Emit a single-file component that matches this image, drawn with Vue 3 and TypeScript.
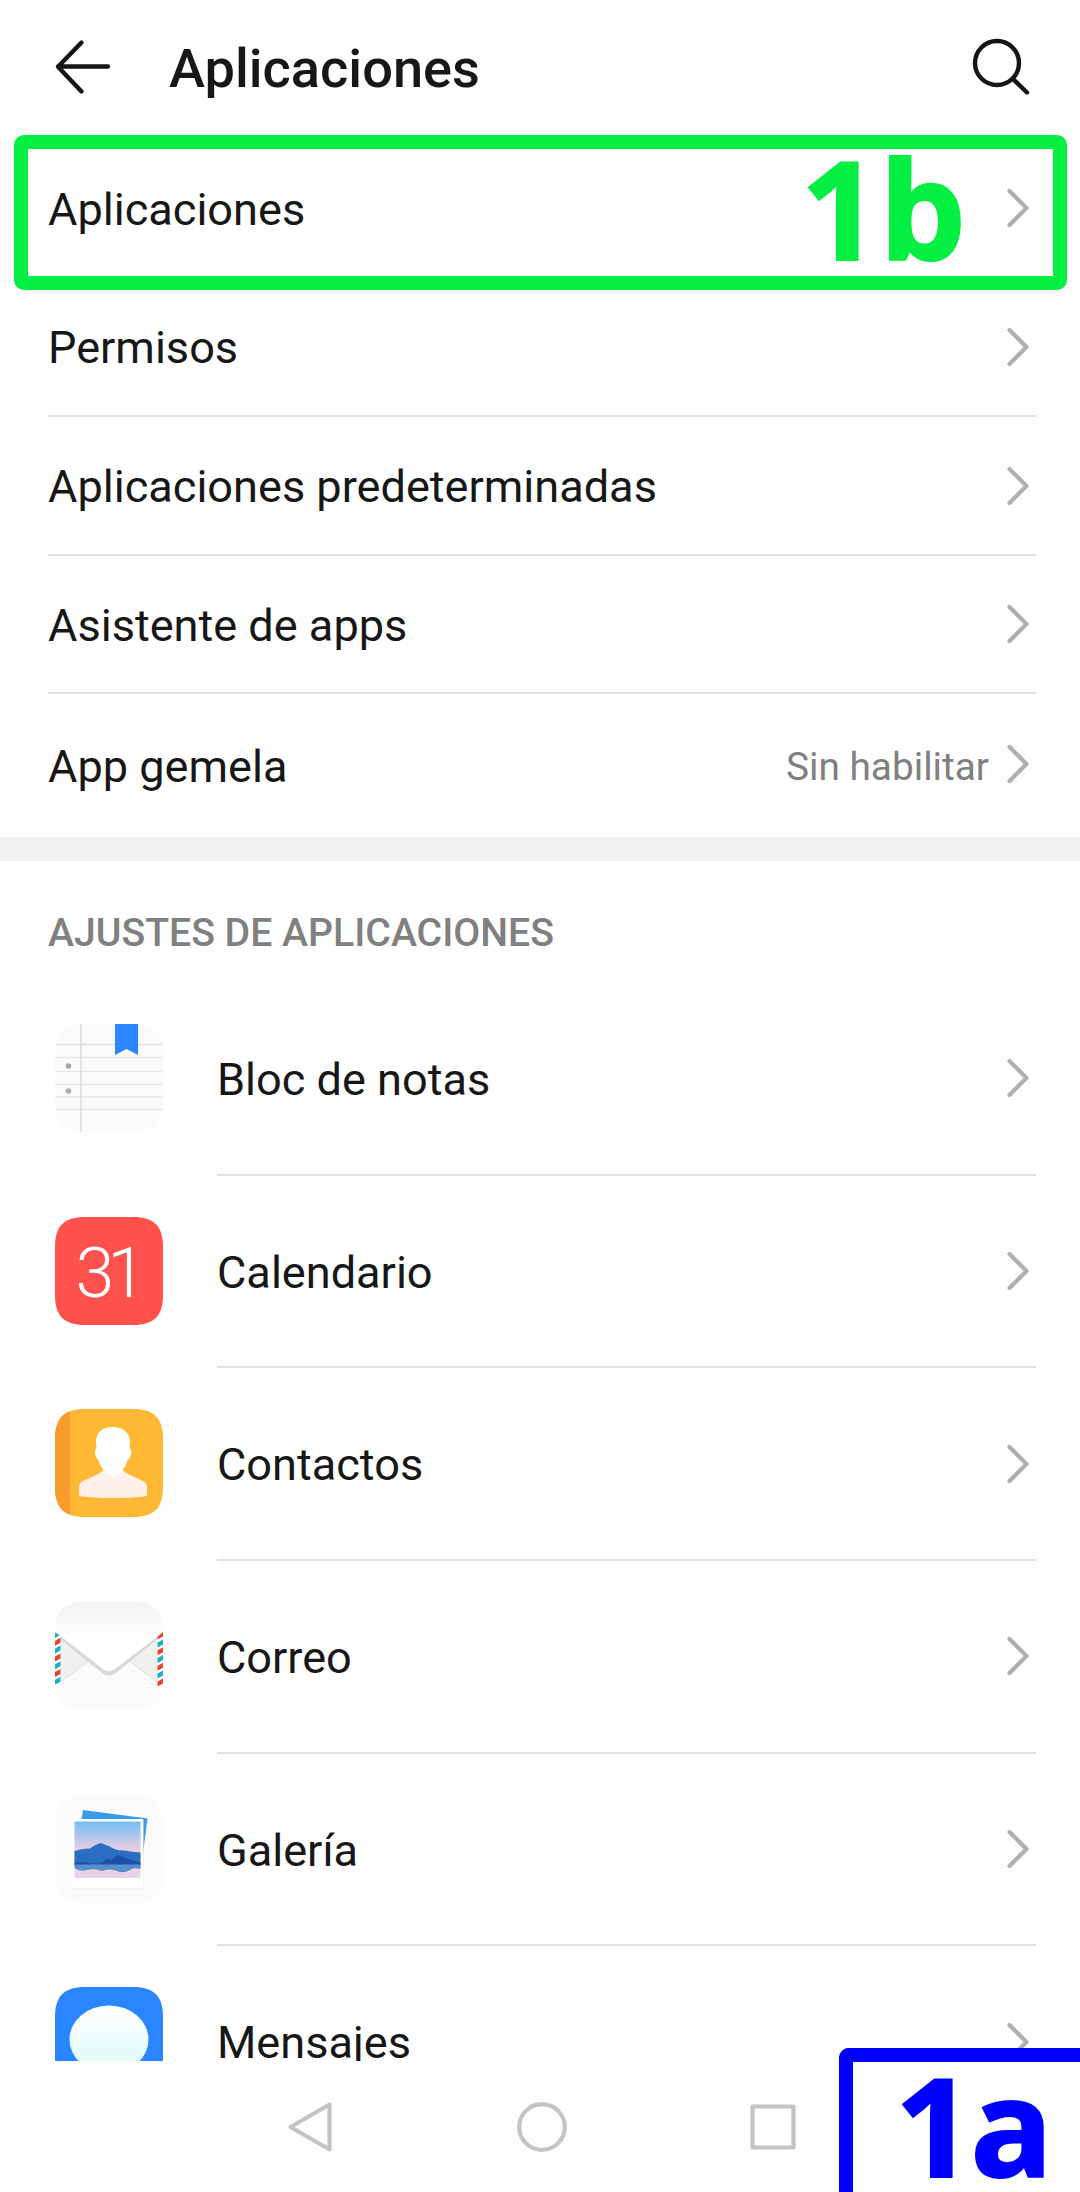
<script setup lang="ts">
interface Setting {
  label: string
  value?: string
  height: number
}

interface AppEntry {
  label: string
  icon: 'notes' | 'calendar' | 'contacts' | 'mail' | 'gallery' | 'messages'
}

const settings: Setting[] = [
  { label: 'Aplicaciones', height: 139 },
  { label: 'Permisos', height: 139 },
  { label: 'Aplicaciones predeterminadas', height: 139 },
  { label: 'Asistente de apps', height: 138 },
  { label: 'App gemela', value: 'Sin habilitar', height: 143 },
]

const apps: AppEntry[] = [
  { label: 'Bloc de notas', icon: 'notes' },
  { label: 'Calendario', icon: 'calendar' },
  { label: 'Contactos', icon: 'contacts' },
  { label: 'Correo', icon: 'mail' },
  { label: 'Galería', icon: 'gallery' },
  { label: 'Mensajes', icon: 'messages' },
]

// Rounded app tile shared by every icon
const tile = 'M30 0H78C99 0 108 9 108 30V78C108 99 99 108 78 108H30C9 108 0 99 0 78V30C0 9 9 0 30 0Z'

// Slanted airmail stripes along one edge of the envelope
const stripe = (x: number, y: number) =>
  `M${x} ${y - 1}L${x + 5.5} ${y - 4}V${y + 1}L${x} ${y + 4}Z`
const stripes = [0, 1, 2, 3, 4, 5, 6].map((i) => ({
  left: stripe(0, 32 + i * 7.8),
  right: stripe(102.5, 33.6 + i * 7.8),
  even: i % 2 === 0,
}))
</script>

<template>
  <div class="screen">
    <header class="bar">
      <svg class="back" width="60" height="60" viewBox="0 0 60 60">
        <path d="M28.500 5.500L5 29.700L28.500 54.500M5 29.500H55" />
      </svg>
      <h1>Aplicaciones</h1>
      <svg class="search" width="60" height="60" viewBox="0 0 60 60">
        <circle cx="26" cy="26" r="22" />
        <path d="M42.500 42.500L56 55.500" />
      </svg>
    </header>

    <main class="content">
      <section class="settings">
        <div v-for="s in settings" :key="s.label" class="row" :style="{ height: s.height + 'px' }">
          <span class="label">{{ s.label }}</span>
          <span v-if="s.value" class="value">{{ s.value }}</span>
          <svg class="chevron" width="24" height="40" viewBox="0 0 24 40">
            <path d="M3.500 3L20.500 20L3.500 37" />
          </svg>
        </div>
      </section>

      <div class="gap"></div>
      <h2>AJUSTES DE APLICACIONES</h2>

      <section>
        <div v-for="a in apps" :key="a.label" class="app">
          <svg class="icon" width="108" height="108" viewBox="0 0 108 108">
            <defs>
              <clipPath :id="'tile-' + a.icon"><path :d="tile" /></clipPath>
            </defs>
            <g :clip-path="`url(#tile-${a.icon})`">
              <template v-if="a.icon === 'notes'">
                <rect width="108" height="108" fill="#fbfbfb" />
                <path d="M0 20.500H108" stroke="#dedede" stroke-width="1.600" />
                <path d="M0 33.500H108M0 47.500H108M0 60.500H108M0 73H108M0 85.500H108" stroke="#e8e8e8" stroke-width="1.500" />
                <path d="M26 0V108" stroke="#dcdcdc" stroke-width="1.600" />
                <circle cx="13.500" cy="42" r="2.800" fill="#a9a9ad" />
                <circle cx="13.500" cy="67" r="2.800" fill="#a9a9ad" />
                <path d="M60 0H83V31L71.500 25L60 31Z" fill="#2b87ff" />
              </template>

              <template v-else-if="a.icon === 'calendar'">
                <rect width="108" height="108" fill="#ff524d" />
                <text class="day" x="20.500" y="79.500">31</text>
              </template>

              <template v-else-if="a.icon === 'contacts'">
                <defs>
                  <linearGradient id="bust" x1="0" y1="0" x2="0" y2="1">
                    <stop offset="0" stop-color="#fbf3ee" />
                    <stop offset="1" stop-color="#ffefe6" />
                  </linearGradient>
                </defs>
                <rect width="108" height="108" fill="#ffb833" />
                <rect width="15" height="108" fill="#f79b2c" />
                <path d="M48 62L43 65L28 72Q24 74 24 78V87Q38 89 58 89T92 87V78Q92 74 88 72L73 65L68 62Z" fill="url(#bust)" />
                <path d="M57.500 18C68 18 75 24 75 33L74.500 39Q77 41 76 45Q75 50 72.500 51Q71 57 68 60V63Q63 65 58 68Q53 65 48 63V60Q45 57 43.500 51Q41 50 40 45Q39.500 41 41.500 39L41 33C41 24 47 18 57.500 18Z" fill="#fff" />
              </template>

              <template v-else-if="a.icon === 'mail'">
                <defs>
                  <linearGradient id="flap" x1="0" y1="0" x2="0" y2="1">
                    <stop offset="0" stop-color="#f1f2f2" />
                    <stop offset="0.500" stop-color="#ffffff" />
                  </linearGradient>
                </defs>
                <rect width="108" height="108" fill="#fbfbfb" />
                <path d="M0 31L35 58L0 84Z M108 31L73 58L108 84Z" fill="#f0f0f0" />
                <path d="M6 80L35 58M102 80L73 58" stroke="#e2e2e2" stroke-width="1" />
                <path d="M0 33L47 71Q54 76 61 71L108 33V28H0Z" fill="#d9d9d9" />
                <path d="M0 31H5.500V84H0ZM102.500 31H108V84H102.500Z" fill="#fff" />
                <template v-for="s in stripes" :key="s.left">
                  <path :d="s.left" :fill="s.even ? '#1fb0c8' : '#e8452c'" />
                  <path :d="s.right" :fill="s.even ? '#e8452c' : '#1fb0c8'" />
                </template>
                <path d="M0 0H108V30L102.500 34.500L60 67Q54 71 48 67L5.500 34L0 30Z" fill="url(#flap)" />
              </template>

              <template v-else-if="a.icon === 'gallery'">
                <defs>
                  <linearGradient id="sky" x1="0" y1="0" x2="0" y2="1">
                    <stop offset="0" stop-color="#74bdf5" />
                    <stop offset="0.550" stop-color="#f3cfdc" />
                    <stop offset="1" stop-color="#e9d2ea" />
                  </linearGradient>
                </defs>
                <rect width="108" height="108" fill="#fbfbfb" />
                <path d="M28 15L92.500 23.500L88 58L80 80L24 40Z" fill="#369bea" />
                <rect x="17" y="24.500" width="71.500" height="70" fill="#e9e9e9" />
                <rect x="17" y="24" width="71" height="69.500" fill="#fff" />
                <rect x="19.500" y="26.500" width="66" height="56.500" fill="url(#sky)" />
                <path d="M19.500 56Q28 53 35 53.500Q41 49 46 48Q50 50 54 51Q61 56 70 55.500Q77 57 85.500 57.500V70H19.500Z" fill="#2a6ec4" />
                <path d="M19.500 68Q26 66 34 68Q40 69 46 68L52 64L56 65L63 60L70 63L80 66L85.500 68V70H19.500Z" fill="#1d4fa4" />
                <path d="M19.500 69.500H85.500V74Q78 72 75 75Q68 79 62 76Q54 73 47 76Q40 73 32 75Q25 77 19.500 73Z" fill="#568dcc" />
              </template>

              <template v-else>
                <defs>
                  <linearGradient id="bubble" x1="0" y1="0" x2="0" y2="1">
                    <stop offset="0" stop-color="#ffffff" />
                    <stop offset="1" stop-color="#dcfafa" />
                  </linearGradient>
                </defs>
                <rect width="108" height="108" fill="#2a86ff" />
                <ellipse cx="54" cy="52.500" rx="39.500" ry="34" fill="url(#bubble)" />
              </template>
            </g>
          </svg>
          <div class="body">
            <span class="label">{{ a.label }}</span>
            <svg class="chevron" width="24" height="40" viewBox="0 0 24 40">
              <path d="M3.500 3L20.500 20L3.500 37" />
            </svg>
          </div>
        </div>
      </section>
    </main>

    <nav class="nav">
      <svg width="54" height="54" viewBox="0 0 54 54">
        <path d="M44.500 4.500V49.500L5.500 27Z" />
      </svg>
      <svg width="54" height="54" viewBox="0 0 54 54">
        <circle cx="27" cy="27" r="22.800" />
      </svg>
      <svg width="54" height="54" viewBox="0 0 54 54">
        <rect x="6.500" y="6.500" width="41" height="41" />
      </svg>
    </nav>

    <div class="mark green"><span>1b</span></div>
    <div class="mark blue"><span>1a</span></div>
  </div>
</template>

<style>
body {
  margin: 0;
  background: #fefefe;
}
</style>

<style scoped>
.screen {
  position: relative;
  display: flex;
  flex-direction: column;
  width: 1080px;
  height: 2192px;
  overflow: hidden;
  background: #fefefe;
  color: #171717;
  font-family: Roboto, "Liberation Sans", sans-serif;
}
.bar {
  display: flex;
  align-items: center;
  flex: none;
  height: 139px;
  box-sizing: border-box;
  padding: 0 49.500px 6px 53px;
}
.bar svg,
.chevron,
.nav svg {
  flex: none;
  fill: none;
  stroke-linecap: round;
  stroke-linejoin: round;
}
.bar svg {
  stroke: #151515;
  stroke-width: 4.4px;
}
h1 {
  flex: 1;
  margin: 4px 0 0 56px;
  font-size: 54.2px;
  line-height: 64px;
  font-weight: 500;
}
.content {
  flex: none;
  height: 1922px;
  overflow: hidden;
}
.row {
  display: flex;
  align-items: center;
  box-sizing: border-box;
  margin: 0 44px 0 48px;
  padding-right: 6px;
  border-bottom: 2px solid #e0e0e0;
}
.row:first-child .label {
  padding-top: 5px;
}
.row:last-child {
  border-bottom: 0;
}
.row:last-child .chevron {
  margin-bottom: 3px;
}
.label {
  flex: 1;
  font-size: 45.1px;
  line-height: 54px;
  padding-top: 3px;
}
.value {
  margin-right: 17px;
  padding-top: 2px;
  color: #808080;
  font-size: 38.8px;
}
.chevron {
  stroke: #b0b0b0;
  stroke-width: 4.2px;
}
.gap {
  height: 24px;
  background: #f1f1f1;
}
h2 {
  height: 122px;
  box-sizing: border-box;
  margin: 0;
  padding: 49px 48px 0;
  color: #808080;
  font-size: 39.2px;
  line-height: 46px;
  font-weight: 500;
}
.app {
  display: flex;
  align-items: center;
  height: 192.7px;
  padding: 0 44px 0 54.500px;
}
.icon {
  flex: none;
  margin: 0 54.500px 3px 0;
}
.body {
  display: flex;
  align-items: center;
  flex: 1;
  height: 100%;
  box-sizing: border-box;
  padding-right: 6px;
  border-bottom: 2px solid #e0e0e0;
}
.day {
  font: 300 70px Roboto, sans-serif;
  letter-spacing: -7px;
  fill: #fff;
}
.nav {
  display: flex;
  justify-content: center;
  align-items: center;
  gap: 176.500px;
  flex: none;
  height: 131px;
  box-sizing: border-box;
  padding-left: 4px;
}
.nav svg {
  stroke: #c4c4c4;
  stroke-width: 4.2px;
}
.mark {
  position: absolute;
  box-sizing: border-box;
  font-family: "Open Sans", "Noto Sans", sans-serif;
  font-size: 137px;
  line-height: 120px;
  font-weight: 700;
  -webkit-text-stroke: 2px currentColor;
}
.mark span {
  position: absolute;
  white-space: nowrap;
}
.green {
  left: 14px;
  top: 135px;
  width: 1053px;
  height: 155px;
  border-radius: 10px;
  border: 14px solid #05ee42;
  color: #05ee42;
}
.green span {
  left: 773px;
  top: -2px;
}
.blue {
  left: 839px;
  top: 2048px;
  width: 241px;
  height: 144px;
  border-radius: 10px 0 0 0;
  border: solid #0000ff;
  border-width: 14px 0 0 14px;
  background: #fefefe;
  color: #0000ff;
}
.blue span {
  left: 42px;
  top: 2px;
  letter-spacing: -3px;
}
</style>
